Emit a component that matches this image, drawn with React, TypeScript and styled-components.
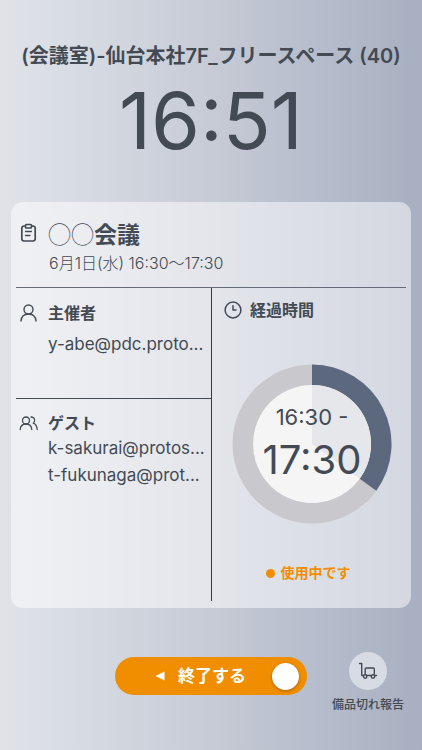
import React from "react";
import styled, { createGlobalStyle } from "styled-components";

const ink = "#434a54";
const orange = "#f18e00";

const GlobalStyle = createGlobalStyle`
  *, *::before, *::after { box-sizing: border-box; }
  body {
    margin: 0;
    color: ${ink};
    font-family: Inter, "Noto Sans CJK JP", sans-serif;
  }
  button { font: inherit; color: inherit; border: 0; background: none; padding: 0; cursor: pointer; }
  h1, h2, h3, p, ul { margin: 0; padding: 0; }
`;

const Screen = styled.main`
  min-height: 100vh;
  display: flex;
  flex-direction: column;
  padding: 40px 11px 36px;
  background: linear-gradient(90deg, #e0e2e7 0%, #dadee6 12%, #c8ccd6 48%, #b5bccb 76%, #a8afc0 100%);
`;

const RoomName = styled.h1`
  font-size: 20px;
  font-weight: 600;
  line-height: 32px;
  text-align: center;
  white-space: nowrap;
`;

const Clock = styled.time`
  font-size: 79px;
  line-height: 96px;
  text-align: center;
`;

const Card = styled.section`
  margin-top: 34px;
  padding: 0 5px 7px;
  border-radius: 12px;
  background: rgba(255, 255, 255, 0.5);
`;

const Meeting = styled.header`
  display: grid;
  grid-template-columns: 32px 1fr;
  align-items: center;
  padding: 14px 0 12px;
  border-bottom: 1px solid #656b77;
`;

const MeetingTitle = styled.h2`
  font-family: "Noto Sans CJK JP", sans-serif;
  font-size: 23px;
  font-weight: 700;
  line-height: 34px;
`;

const Placeholder = styled.span`
  font-weight: 300;
`;

const MeetingTime = styled.p`
  grid-column: 2;
  padding: 1px 0 0 1px;
  font-size: 16px;
  font-weight: 300;
  line-height: 24px;
`;

const Details = styled.div`
  display: grid;
  grid-template-columns: 1fr 1fr;
`;

const People = styled.div`
  display: grid;
  grid-template-rows: 110px 203px;
  min-width: 0;
`;

const Group = styled.section`
  min-width: 0;
  padding-top: 13px;
  & + & { border-top: 1px solid #434a56; padding-top: 12px; }
`;

const GroupHead = styled.div`
  display: grid;
  grid-template-columns: 32px 1fr;
  align-items: center;
`;

const Label = styled.h3`
  font-size: 16px;
  font-weight: 700;
  line-height: 24px;
`;

const Names = styled.ul<{ $gap: number }>`
  list-style: none;
  margin-top: ${(p) => p.$gap}px;
  padding-left: 32px;
  font-size: 17px;
  line-height: 27px;
  white-space: nowrap;
`;

const Elapsed = styled.section`
  display: flex;
  flex-direction: column;
  align-items: center;
  padding: 10px 0 15px 6px;
  border-left: 1px solid #363c47;
`;

const ElapsedHead = styled.div`
  align-self: stretch;
  display: flex;
  align-items: center;
  gap: 7px;
  padding-left: 5px;
`;

const Dial = styled.div`
  display: grid;
  place-items: center;
  margin-top: 42px;
  & > * { grid-area: 1 / 1; }
`;

const Period = styled.div`
  display: flex;
  flex-direction: column;
  align-items: center;
  z-index: 1;
`;

const Start = styled.time`
  font-size: 22px;
  line-height: 30px;
  margin-top: 2px;
`;

const End = styled.time`
  font-size: 40px;
  line-height: 56px;
`;

const Status = styled.p`
  display: flex;
  align-items: center;
  gap: 6px;
  margin-top: 39px;
  padding-right: 8px;
  color: ${orange};
  font-size: 14px;
  font-weight: 700;
  line-height: 20px;
  &::before { content: ""; width: 9px; height: 9px; border-radius: 50%; background: currentColor; }
`;

const Footer = styled.footer`
  display: grid;
  grid-template-columns: 1fr auto 1fr;
  margin-top: 44px;
`;

const EndButton = styled.button`
  grid-column: 2;
  display: flex;
  align-items: center;
  width: 192px;
  height: 38px;
  margin-top: 5px;
  padding: 0 8px 0 40px;
  border-radius: 19px;
  background: ${orange};
  color: #fff;
  font-size: 17px;
  font-weight: 700;
  line-height: 24px;
`;

const EndText = styled.span`
  margin-left: 13px;
`;

const Knob = styled.span`
  width: 27px;
  height: 27px;
  margin-left: auto;
  border-radius: 50%;
  background: #fff;
  box-shadow: 0 1px 3px rgba(90, 50, 0, 0.5);
`;

const ReportButton = styled.button`
  justify-self: end;
  display: flex;
  flex-direction: column;
  align-items: center;
  gap: 6px;
  margin-right: 7px;
  font-size: 12px;
  font-weight: 500;
  line-height: 18px;
  white-space: nowrap;
`;

const Disc = styled.span`
  display: grid;
  place-items: center;
  width: 38px;
  height: 38px;
  border-radius: 50%;
  background: #d7dbe3;
`;

const Icon = styled.svg`
  display: block;
  fill: none;
  stroke: ${ink};
  stroke-linecap: round;
  stroke-linejoin: round;
`;

const ClipboardIcon = () => (
  <Icon width="24" height="24" viewBox="0 0 24 24" strokeWidth="1.7" aria-hidden="true">
    <path d="M9 5H8a2.2 2.2 0 0 0-2.2 2.2v10.6A2.2 2.2 0 0 0 8 20h9a2.2 2.2 0 0 0 2.2-2.2V7.2A2.2 2.2 0 0 0 17 5h-1" />
    <rect x="9.5" y="3.5" width="6" height="3.5" rx="1" />
    <path d="M9.5 10.5h6M9.500 14.500h4.500" strokeWidth="1.3" />
  </Icon>
);

const PersonIcon = () => (
  <Icon width="24" height="24" viewBox="0 0 24 24" strokeWidth="1.4" aria-hidden="true">
    <circle cx="12.5" cy="8.5" r="4.5" />
    <path d="M5 20c.4-4.200 3.200-7 7.500-7s7.100 2.800 7.500 7" />
  </Icon>
);

const PeopleIcon = () => (
  <Icon width="24" height="24" viewBox="0 0 24 24" strokeWidth="1.3" aria-hidden="true">
    <circle cx="10" cy="9.5" r="3.5" />
    <path d="M4.200 18.500c.3-3.300 2.500-5.500 5.800-5.500s5.500 2.200 5.800 5.500" />
    <path d="M15 6c3.500-.3 5 3.800 2.300 6.200c2.400.9 3.700 3.100 3.900 6.300" />
  </Icon>
);

const ClockIcon = () => (
  <Icon width="20" height="20" viewBox="0 0 20 20" strokeWidth="1.5" aria-hidden="true">
    <circle cx="10" cy="10" r="7.9" />
    <path d="M10 5.800V10h3" />
  </Icon>
);

const CartIcon = () => (
  <Icon width="20" height="18" viewBox="0 0 20 18" strokeWidth="1.4" aria-hidden="true">
    <path d="M1.500 1.500h2.200v12h1.800M9 13.500h4M17 13.500h1.500" />
    <path d="M7.200 12V7a1 1 0 0 1 1-1h7.100a1 1 0 0 1 1 1v5" />
    <circle cx="7.2" cy="14.5" r="1.7" />
    <circle cx="15" cy="14.5" r="1.7" />
  </Icon>
);

const Ring = ({ progress }: { progress: number }) => {
  const a = progress * Math.PI * 2;
  const point = (r: number) => `${80 + r * Math.sin(a)} ${80 - r * Math.cos(a)}`;
  const sector = (r: number) => `M80 80V${80 - r}A${r} ${r} 0 ${progress > 0.5 ? 1 : 0} 1 ${point(r)}Z`;
  return (
    <svg width="160" height="160" viewBox="0 0 160 160" aria-hidden="true">
      <circle cx="80" cy="80" r="79.5" fill="#c8c8cd" />
      <path d={sector(79.5)} fill="#5b687e" />
      <circle cx="80" cy="80" r="59" fill="#f5f5f6" />
      <path d={sector(59)} fill="#e5e7ea" />
    </svg>
  );
};

export default function App() {
  return (
    <>
      <GlobalStyle />
      <Screen>
        <RoomName>(会議室)-仙台本社7F_フリースペース (40)</RoomName>
        <Clock>16:51</Clock>
        <Card>
          <Meeting>
            <ClipboardIcon />
            <MeetingTitle>
              <Placeholder>◯◯</Placeholder>会議
            </MeetingTitle>
            <MeetingTime>6月1日(水) 16:30〜17:30</MeetingTime>
          </Meeting>
          <Details>
            <People>
              <Group>
                <GroupHead>
                  <PersonIcon />
                  <Label>主催者</Label>
                </GroupHead>
                <Names $gap={6}>
                  <li>y-abe@pdc.proto...</li>
                </Names>
              </Group>
              <Group>
                <GroupHead>
                  <PeopleIcon />
                  <Label>ゲスト</Label>
                </GroupHead>
                <Names $gap={0}>
                  <li>k-sakurai@protos...</li>
                  <li>t-fukunaga@prot...</li>
                </Names>
              </Group>
            </People>
            <Elapsed>
              <ElapsedHead>
                <ClockIcon />
                <Label>経過時間</Label>
              </ElapsedHead>
              <Dial>
                <Ring progress={0.35} />
                <Period>
                  <Start>16:30 -</Start>
                  <End>17:30</End>
                </Period>
              </Dial>
              <Status>使用中です</Status>
            </Elapsed>
          </Details>
        </Card>
        <Footer>
          <EndButton type="button">
            <svg width="10" height="10" viewBox="0 0 10 10" aria-hidden="true">
              <path d="M0.500 5L9.500 0.500V9.500Z" fill="#fff" />
            </svg>
            <EndText>終了する</EndText>
            <Knob />
          </EndButton>
          <ReportButton type="button">
            <Disc>
              <CartIcon />
            </Disc>
            備品切れ報告
          </ReportButton>
        </Footer>
      </Screen>
    </>
  );
}
